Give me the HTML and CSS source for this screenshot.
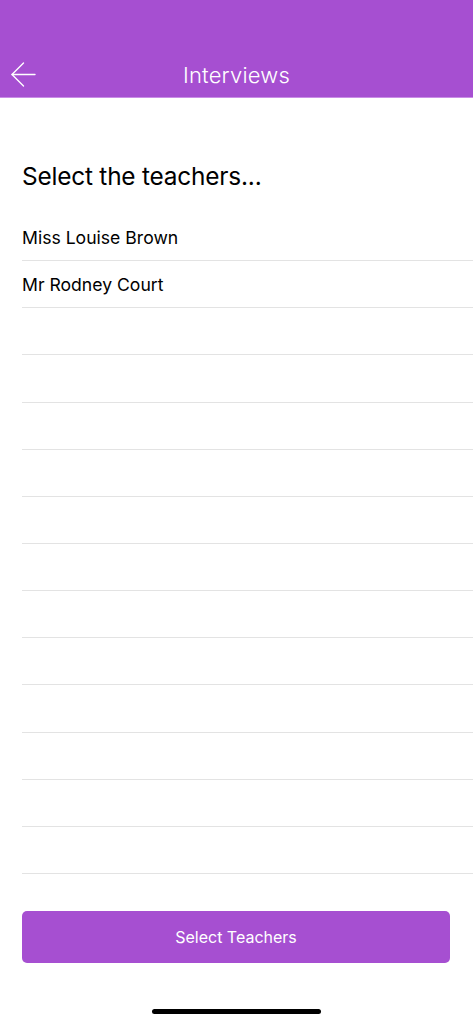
FILE: index.html
```html
<!DOCTYPE html>
<html lang="en">
<head>
  <meta charset="UTF-8" />
  <title>Interviews</title>
  <link rel="stylesheet" href="styles.css">
</head>
<body>

  <!-- Nav bar -->
  <header class="nav">
    <div class="nav-bar">
      <a class="back" href="#">
        <svg width="26" height="26" viewBox="0 0 26 26" fill="none" stroke="#fff" stroke-width="1.4" stroke-linecap="round" stroke-linejoin="round">
          <path d="M25 12.5H2"/>
          <path d="M13.5 1L2 12.5L13.5 24"/>
        </svg>
      </a>
      <h1>Interviews</h1>
    </div>
  </header>

  <main class="content">
    <h2>Select the teachers...</h2>

    <ul class="teacher-list" id="teacherList"></ul>
  </main>

  <div class="footer">
    <button class="select-btn">Select Teachers</button>
  </div>

  <div class="home-bar"></div>

  <script>
    // names first, then empty rows to fill the table
    const teachers = ["Miss Louise Brown", "Mr Rodney Court"];
    const list = document.getElementById("teacherList");
    for (let i = 0; i < 14; i++) {
      const li = document.createElement("li");
      li.textContent = teachers[i] || "";
      list.appendChild(li);
    }
  </script>
</body>
</html>
```

FILE: styles.css
```css
body {
  margin: 0;
  font-family: Inter, "Liberation Sans", Arial, sans-serif;
  background: #fff;
  color: #000;
  height: 1024px;
  display: flex;
  flex-direction: column;
}

.nav {
  background: #a64fd1;
  height: 97px;
  display: flex;
  align-items: flex-end;
  border-bottom: 1px solid #c98de6;
}

.nav-bar {
  flex: 1;
  height: 44px;
  position: relative;
  display: flex;
  align-items: center;
  justify-content: center;
}

.nav-bar .back {
  position: absolute;
  left: 10px;
  top: 9px;
  display: flex;
}

.nav-bar h1 {
  margin: 0;
  font-size: 22px;
  font-weight: 300;
  color: #fff;
  letter-spacing: 0.2px;
}

.content {
  padding-left: 22px;
}

.content h2 {
  margin: 59px 0 0;
  font-size: 24.4px;
  font-weight: 400;
  line-height: 38px;
  letter-spacing: -0.2px;
}

.teacher-list {
  list-style: none;
  margin: 19px 0 0;
  padding: 0;
}

.teacher-list li {
  height: 47.15px;
  box-sizing: border-box;
  border-bottom: 1px solid #e3e3e3;
  font-size: 17.6px;
  display: flex;
  align-items: center;
  padding-top: 1px;
}

.footer {
  padding: 37px 23px 0 22px;
}

.select-btn {
  width: 100%;
  height: 52px;
  border: none;
  border-radius: 5px;
  background: #a64fd1;
  color: #fff;
  font-family: inherit;
  font-size: 16px;
  font-weight: 400;
}

.home-bar {
  width: 169px;
  height: 5px;
  border-radius: 3px;
  background: #000;
  margin: 46px auto 0;
}
```
